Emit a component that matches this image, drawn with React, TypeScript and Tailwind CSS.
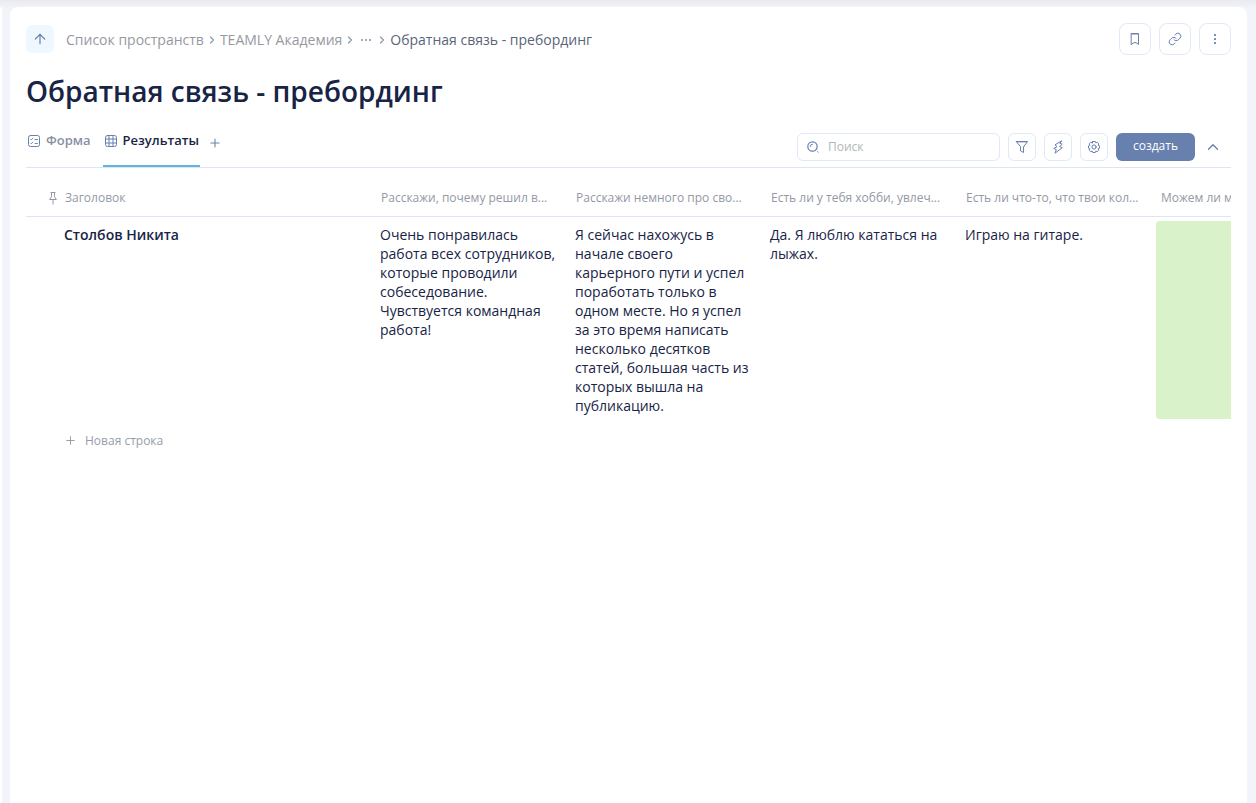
import type { ReactNode } from 'react';
import { ArrowUp, ChevronRight, ChevronUp, Link, Plus } from 'lucide-react';

const columns = [
  'Расскажи, почему решил в...',
  'Расскажи немного про сво...',
  'Есть ли у тебя хобби, увлеч...',
  'Есть ли что-то, что твои кол...',
  'Можем ли мы',
];

const answers = [
  'Очень понравилась работа всех сотрудников, которые проводили собеседование. Чувствуется командная работа!',
  'Я сейчас нахожусь в начале своего карьерного пути и успел поработать только в одном месте. Но я успел за это время написать несколько десятков статей, большая часть из которых вышла на публикацию.',
  'Да. Я люблю кататься на лыжах.',
  'Играю на гитаре.',
];

const Icon = ({ children }: { children: ReactNode }) => (
  <svg
    width="14"
    height="14"
    viewBox="0 0 14 14"
    fill="none"
    stroke="currentColor"
    strokeLinecap="round"
    strokeLinejoin="round"
    aria-hidden="true"
    className="shrink-0"
  >
    {children}
  </svg>
);

const BookmarkIcon = () => (
  <Icon>
    <path d="M3.5 1.5h7v11L9 11.2 7 10.5l-2 .7-1.5 1.3z" />
    <path d="M3.5 2.3h7" strokeWidth="0.6" />
  </Icon>
);

const MoreIcon = () => (
  <Icon>
    <g fill="currentColor" stroke="none">
      <rect x="6" y="2" width="2" height="2" rx="0.4" />
      <rect x="6" y="6" width="2" height="2" rx="0.4" />
      <rect x="6" y="10" width="2" height="2" rx="0.4" />
    </g>
  </Icon>
);

const FormIcon = () => (
  <Icon>
    <rect x="1.5" y="1.5" width="11" height="11" rx="2" />
    <path d="m3.5 5 .8.8 1.5-1.6M3.5 9l.8.8 1.5-1.6M8 5.5h2.5M8 9.5h2.5" strokeWidth="0.9" />
  </Icon>
);

const GridIcon = () => (
  <Icon>
    <rect x="1.5" y="1.5" width="11" height="11" rx="2" />
    <path d="M1.5 5h11M1.5 9h11M5 1.5v11M9 1.5v11" />
  </Icon>
);

const SearchIcon = () => (
  <Icon>
    <circle cx="6.5" cy="6.5" r="4.7" strokeWidth="1.2" />
    <path d="M4.2 6.5a2.3 2.3 0 0 1 2.3-2.3M11.6 11.6l.6.6" />
  </Icon>
);

const FilterIcon = () => (
  <Icon>
    <path d="M1.5 1.5h11L8.5 7v5.5l-3-1.7V7z" />
    <path d="M2 2.2h10" strokeWidth="0.5" />
  </Icon>
);

const BoltIcon = () => (
  <Icon>
    <path d="M10.4 1 4 4.8l2 1.9-3.3 1.8 2.6 1L4 13.2l7.3-5.5-2.7-1.2 2.6-2.3-2-.8z" />
  </Icon>
);

const GearIcon = () => (
  <Icon>
    <path d="M5.7 1.5h2.6l.5 1.4 1.5-.6 1.5 1.6-.6 1.4 1.3.6v2.3l-1.3.5.6 1.4-1.6 1.6-1.4-.6-.5 1.4H5.7l-.5-1.4-1.4.6-1.6-1.6.6-1.4-1.3-.5V5.9l1.3-.6-.6-1.4 1.6-1.6 1.4.6z" />
    <circle cx="7" cy="7" r="2.1" />
  </Icon>
);

const PinIcon = () => (
  <Icon>
    <path d="M5 1.5h4M5.5 1.5v4.2L3.6 8.5h6.8L8.5 5.7V1.5M7 8.5V13" />
  </Icon>
);

const HeaderButton = ({ label, children }: { label: string; children: ReactNode }) => (
  <button
    aria-label={label}
    className="flex h-8 w-8 items-center justify-center rounded-lg border border-[#dfe9f7] text-[#6880ae]"
  >
    {children}
  </button>
);

const ToolButton = ({ label, children }: { label: string; children: ReactNode }) => (
  <button
    aria-label={label}
    className="flex h-7 w-7 items-center justify-center rounded-md border border-[#dfe9f7] text-[#6880ae]"
  >
    {children}
  </button>
);

const Separator = () => (
  <ChevronRight size={12} strokeWidth={2.5} className="mx-0.5 text-[#8f98a8]" aria-hidden="true" />
);

const Header = () => (
  <header className="flex items-center justify-between">
    <div className="flex items-center gap-3">
      <button
        aria-label="Наверх"
        className="flex h-7 w-7 items-center justify-center rounded-md bg-[#eff8ff] text-[#6880ae]"
      >
        <ArrowUp size={16} strokeWidth={1.8} />
      </button>
      <nav className="flex items-center pt-0.5 text-sm text-[#96999f]">
        <a href="#spaces">Список пространств</a>
        <Separator />
        <a href="#academy">TEAMLY Академия</a>
        <Separator />
        <button aria-label="Показать путь" className="mx-0.5">
          <svg width="12" height="14" viewBox="0 0 12 14" fill="#a3abb9" aria-hidden="true">
            <rect x="1" y="6" width="2" height="2" />
            <rect x="5" y="6" width="2" height="2" />
            <rect x="9" y="6" width="2" height="2" />
          </svg>
        </button>
        <Separator />
        <a href="#feedback" className="text-[#5a6478]">Обратная связь - пребординг</a>
      </nav>
    </div>
    <div className="flex gap-2">
      <HeaderButton label="В закладки"><BookmarkIcon /></HeaderButton>
      <HeaderButton label="Ссылка"><Link size={14} strokeWidth={1.7} /></HeaderButton>
      <HeaderButton label="Ещё"><MoreIcon /></HeaderButton>
    </div>
  </header>
);

const Toolbar = () => (
  <div className="mt-5 flex justify-between border-b border-[#dbe6f4]">
    <div className="flex text-[13px] font-semibold">
      <button className="mr-[11px] flex h-9 items-start px-px">
        <span className="flex h-5 items-center gap-[5px] text-[#6880ae]">
          <FormIcon />
          <span className="text-[#8791a3]">Форма</span>
        </span>
      </button>
      <button className="flex h-9 items-start border-b-2 border-[#64b5dc] px-px">
        <span className="flex h-5 items-center gap-[5px] text-[#6880ae]">
          <GridIcon />
          <span className="text-[#172445]">Результаты</span>
        </span>
      </button>
      <button aria-label="Добавить вид" className="ml-2 flex h-6 items-center text-[#6880ae]">
        <Plus size={14} strokeWidth={1.8} />
      </button>
    </div>
    <div className="flex items-end gap-2 pr-2 pb-1.5">
      <label className="flex h-7 w-[203px] items-center gap-2 rounded-md border border-[#dfe9f7] px-2 text-[#6880ae]">
        <SearchIcon />
        <input
          type="search"
          aria-label="Поиск"
          placeholder="Поиск"
          className="w-full min-w-0 text-xs text-[#172445] outline-none placeholder:text-[#b0b8b8]"
        />
      </label>
      <ToolButton label="Фильтр"><FilterIcon /></ToolButton>
      <ToolButton label="Автоматизация"><BoltIcon /></ToolButton>
      <ToolButton label="Настройки"><GearIcon /></ToolButton>
      <button className="h-7 rounded-md bg-[#6880ae] px-[17px] pb-0.5 text-xs text-white">создать</button>
      <button aria-label="Свернуть" className="flex h-7 w-5 items-center justify-center text-[#6880ae]">
        <ChevronUp size={18} strokeWidth={1.8} />
      </button>
    </div>
  </div>
);

const ResultsTable = () => (
  <div className="overflow-x-auto [scrollbar-width:none]">
    <table className="w-[1325px] table-fixed text-left">
      <colgroup>
        <col className="w-[350px]" />
        {columns.map((column) => (
          <col key={column} className="w-[195px]" />
        ))}
      </colgroup>
      <thead>
        <tr className="h-12 border-b border-[#dbe6f4] text-xs whitespace-nowrap text-[#9399a5]">
          <th className="pt-3 pl-5 font-normal">
            <span className="flex items-center gap-[5px]">
              <PinIcon />
              Заголовок
            </span>
          </th>
          {columns.map((column) => (
            <th key={column} className="pt-3 pl-[5px] font-normal">{column}</th>
          ))}
        </tr>
      </thead>
      <tbody>
        <tr className="align-top text-sm leading-[19px] text-[#172445]">
          <th className="py-2 pl-[38px] font-semibold">Столбов Никита</th>
          {answers.map((answer) => (
            <td key={answer} className="py-2 pr-[15px] pl-1">{answer}</td>
          ))}
          <td className="h-px py-1">
            <div className="h-full rounded-sm bg-[#daf2ca]" />
          </td>
        </tr>
      </tbody>
    </table>
    <button className="mt-2.5 ml-[38px] flex items-center gap-2 text-xs text-[#959da9]">
      <Plus size={13} strokeWidth={1.8} />
      Новая строка
    </button>
  </div>
);

const App = () => (
  <div className="flex min-h-screen gap-2 bg-[#f3f4f9] bg-[linear-gradient(#e9eaef,#f3f4f9_8px)] pt-[7px] pr-[9px] font-['Open_Sans','Noto_Sans',sans-serif]">
    <aside className="w-0.5 shrink-0 rounded-tr-lg bg-white" />
    <main className="min-w-0 flex-1 rounded-t-lg bg-white px-4 pt-4">
      <Header />
      <h1 className="mt-4 text-[28px] leading-10 font-semibold text-[#172445]">Обратная связь - пребординг</h1>
      <Toolbar />
      <ResultsTable />
    </main>
  </div>
);

export default App;
